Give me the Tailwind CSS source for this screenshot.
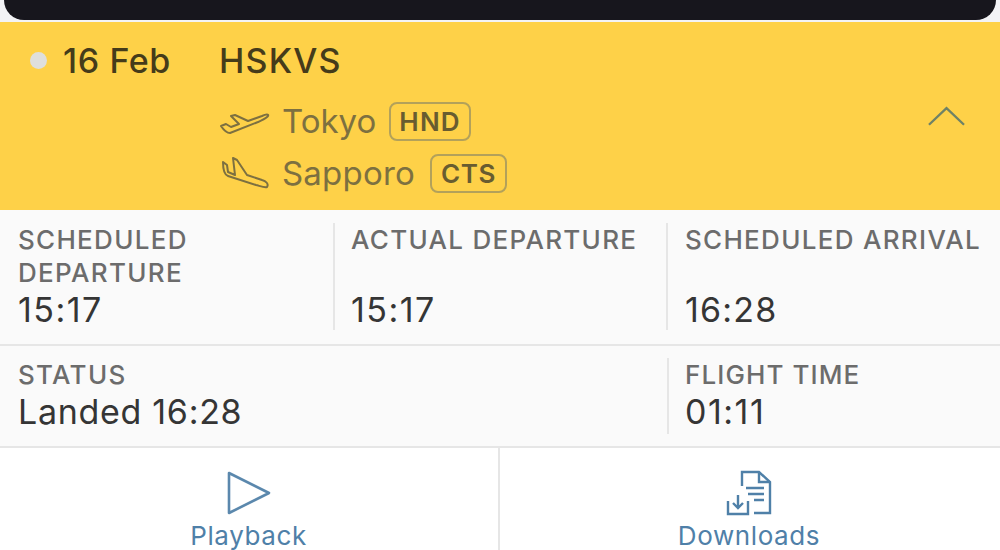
<!DOCTYPE html>
<html lang="en">
<head>
    <meta charset="UTF-8">
    <meta name="viewport" content="width=device-width, initial-scale=1.0">
    <title>Flight details</title>
    <script src="https://cdn.jsdelivr.net/npm/@tailwindcss/browser@4"></script>
</head>
<body class="w-[1000px] h-[550px] overflow-hidden bg-white font-['Inter','Liberation_Sans',sans-serif]">

    <!-- top bar -->
    <div class="h-[22px] bg-[#f3f3f6] pb-[2px]">
        <div class="h-[20px] mx-[4px] bg-[#17161d] rounded-b-[21px]"></div>
    </div>

    <!-- flight header -->
    <div class="h-[188px] bg-[#fed148] flex">
        <div class="w-[220px] pl-[30px] pt-[20px] flex items-start">
            <span class="w-[17px] h-[17px] mt-[10px] rounded-full bg-[#dfdfdc]"></span>
            <span class="ml-[16px] text-[34px] leading-[38px] tracking-[0.6px] font-medium text-[#453b1a]">16 Feb</span>
        </div>
        <div class="flex-1 pt-[20px]">
            <div class="text-[34px] leading-[38px] tracking-[1.2px] font-medium text-[#453b1a] -ml-[1px]">HSKVS</div>
            <div class="flex items-center mt-[21px] h-[40px]">
                <svg class="w-[50px] h-[30px]" viewBox="0 0 50 30" fill="none" stroke="#7d7040" stroke-width="2" stroke-linejoin="round">
                    <path d="M1 20 L6 18 L11 21 L19 18 L11 10 L15 9 L28 15 L42 10 C46 8 49 8 48 10 C47 12 42 14 38 16 L10 27 C7 27 3 23 1 20 Z"/>
                </svg>
                <span class="ml-[12px] text-[33px] leading-[40px] text-[#7d7040]">Tokyo</span>
                <span class="ml-[13px] h-[39px] px-[8px] flex items-center rounded-[8px] border-2 border-[#b3a15a] text-[26px] tracking-[1.2px] font-semibold text-[#685c30]">HND</span>
            </div>
            <div class="flex items-center mt-[12px] h-[40px]">
                <svg class="w-[50px] h-[34px]" viewBox="0 0 50 34" fill="none" stroke="#7d7040" stroke-width="2" stroke-linejoin="round">
                    <path d="M3 6 L7 9 L8 16 L15 19 L13 2 L17 4 L27 19 L42 24 C46 25 49 28 47 31 C45 32 40 30 36 29 L8 20 C5 19 3 15 3 6 Z"/>
                </svg>
                <span class="ml-[12px] text-[33px] leading-[40px] tracking-[0.2px] text-[#7d7040]">Sapporo</span>
                <span class="ml-[15px] h-[39px] px-[9px] flex items-center rounded-[8px] border-2 border-[#b3a15a] text-[26px] tracking-[0.6px] font-semibold text-[#685c30]">CTS</span>
            </div>
        </div>
        <div class="w-[72px] pr-[35px] pt-[84px] flex justify-end">
            <svg class="w-[38px] h-[20px]" viewBox="0 0 38 20" fill="none" stroke="#6f8266" stroke-width="2.4">
                <path d="M1 19 L19 2 L37 19"/>
            </svg>
        </div>
    </div>

    <!-- times -->
    <div class="h-[136px] bg-[#fafafa] border-b-2 border-[#e6e6e6] pt-[13px] grid grid-cols-[335px_333px_1fr]">
        <div class="h-[107px] pl-[18px] border-r-2 border-[#e6e6e6]">
            <div class="text-[26px] leading-[33px] font-medium tracking-[1.3px] text-[#6c6c6c]">SCHEDULED<br>DEPARTURE</div>
            <div class="text-[34px] leading-[41px] tracking-[1.5px] text-[#353535]">15:17</div>
        </div>
        <div class="h-[107px] pl-[16px] border-r-2 border-[#e6e6e6]">
            <div class="text-[26px] leading-[33px] font-medium tracking-[1.3px] text-[#6c6c6c] whitespace-nowrap">ACTUAL DEPARTURE</div>
            <div class="text-[34px] leading-[41px] tracking-[1.5px] mt-[33px] text-[#353535]">15:17</div>
        </div>
        <div class="h-[107px] pl-[17px]">
            <div class="text-[26px] leading-[33px] font-medium tracking-[1.3px] text-[#6c6c6c] whitespace-nowrap">SCHEDULED ARRIVAL</div>
            <div class="text-[34px] leading-[41px] tracking-[1.2px] mt-[33px] text-[#353535]">16:28</div>
        </div>
    </div>

    <!-- status -->
    <div class="h-[102px] bg-[#fafafa] border-b-2 border-[#e6e6e6] pt-[12px] grid grid-cols-[669px_1fr]">
        <div class="h-[76px] pl-[18px] border-r-2 border-[#e6e6e6]">
            <div class="text-[26px] leading-[33px] font-medium tracking-[1.3px] text-[#6c6c6c]">STATUS</div>
            <div class="text-[34px] leading-[41px] tracking-[0.7px] text-[#353535]">Landed 16:28</div>
        </div>
        <div class="h-[76px] pl-[16px]">
            <div class="text-[26px] leading-[33px] font-medium tracking-[1.1px] text-[#6c6c6c]">FLIGHT TIME</div>
            <div class="text-[34px] leading-[41px] tracking-[1.5px] text-[#353535]">01:11</div>
        </div>
    </div>

    <!-- actions -->
    <div class="grid grid-cols-2 h-[102px]">
        <div class="flex flex-col items-center pt-[22px] border-r-2 border-[#e6e6e6]">
            <svg class="w-[44px] h-[46px]" viewBox="0 0 44 46" fill="none" stroke="#5b88ad" stroke-width="2.6" stroke-linejoin="round">
                <path d="M2 3 L42 23 L2 43 Z"/>
            </svg>
            <span class="mt-[3px] text-[26px] leading-[33px] tracking-[0.6px] text-[#4f80a8] -ml-[1px]">Playback</span>
        </div>
        <div class="flex flex-col items-center pt-[22px]">
            <svg class="w-[46px] h-[46px] -ml-[3px]" viewBox="0 0 46 46" fill="none" stroke="#4f80a8" stroke-width="2.4">
                <path d="M16 16 V2 H33 L44 12 V43 H28"/>
                <path d="M33 2 V12 H44"/>
                <path d="M20 18 H38 M22 24 H38 M28 30 H38"/>
                <path d="M2 31 V44 H22 V31"/>
                <path d="M12 25 V38 M7 33 L12 38 L17 33"/>
            </svg>
            <span class="mt-[3px] -ml-[2px] text-[26px] leading-[33px] tracking-[0.6px] text-[#4f80a8]">Downloads</span>
        </div>
    </div>

</body>
</html>
